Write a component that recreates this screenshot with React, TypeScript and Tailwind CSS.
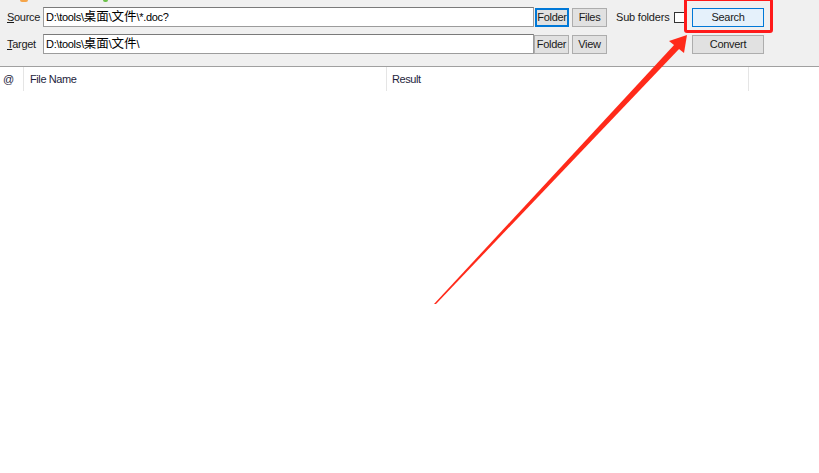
import React from 'react';

const font = { fontFamily: '"Liberation Sans", "Noto Sans CJK SC", sans-serif' };

const Btn: React.FC<{ label: string; w: string; variant?: 'focus' | 'hover' }> = ({ label, w, variant }) => {
  const tone =
    variant === 'focus'
      ? 'bg-[#e1e1e1] border-[#0078d7] border-2'
      : variant === 'hover'
      ? 'bg-[#e5f1fb] border-[#0078d7] border'
      : 'bg-[#e1e1e1] border-[#adadad] border';
  return (
    <div className={`${w} h-[19px] ${tone} flex items-center justify-center text-[11px] text-[#1a1a1a] tracking-[-0.3px]`}>
      {label}
    </div>
  );
};

// Latin in 11px, the Chinese folder names a little bigger like the original
const PathInput: React.FC<{ parts: string[] }> = ({ parts }) => (
  <div className="w-[491px] h-[20px] bg-white border border-[#9c9c9c] border-t-[#7a7a7a] flex items-center pl-[2px] text-[11px] text-black tracking-[-0.3px] whitespace-nowrap">
    {parts.map((p, i) =>
      /[\u4e00-\u9fff]/.test(p) ? (
        <span key={i} className="text-[12.5px] tracking-[0px]">
          {p}
        </span>
      ) : (
        <span key={i}>{p}</span>
      )
    )}
  </div>
);

const App: React.FC = () => {
  return (
    <div className="relative w-[819px] h-[473px] bg-white overflow-hidden" style={font}>
      {/* toolbar */}
      <div className="bg-[#f0f0f0] h-[66px] flex flex-col">
        <div className="h-[7px] flex items-start">
          <div className="ml-[20px] w-[8px] h-[2px] rounded-b bg-[#f5a54a]" />
          <div className="ml-[75px] w-[5px] h-[2px] rounded-b bg-[#6cc04a]" />
        </div>
        <div className="flex items-center h-[20px]">
          <div className="w-[43px] pl-[7px] text-[11px] text-[#1a1a1a] tracking-[-0.3px]">
            <span className="underline">S</span>ource
          </div>
          <PathInput parts={['D:\\tools\\', '桌面', '\\', '文件', '\\*.doc?']} />
          <div className="ml-[1px]">
            <Btn label="Folder" w="w-[34px]" variant="focus" />
          </div>
          <div className="ml-[3px]">
            <Btn label="Files" w="w-[35px]" />
          </div>
          <div className="ml-[9px] text-[11px] text-[#1a1a1a] tracking-[-0.2px] w-[58px]">Sub folders</div>
          <div className="w-[11px] h-[11px] bg-white border border-[#333333]" />
          <div className="ml-[7px]">
            <Btn label="Search" w="w-[72px]" variant="hover" />
          </div>
        </div>
        <div className="flex items-center h-[20px] mt-[7px]">
          <div className="w-[43px] pl-[7px] text-[11px] text-[#1a1a1a] tracking-[-0.3px]">
            <span className="underline">T</span>arget
          </div>
          <PathInput parts={['D:\\tools\\', '桌面', '\\', '文件', '\\']} />
          <div className="ml-[0px]">
            <Btn label="Folder" w="w-[35px]" />
          </div>
          <div className="ml-[3px]">
            <Btn label="View" w="w-[35px]" />
          </div>
          <div className="ml-[85px]">
            <Btn label="Convert" w="w-[72px]" />
          </div>
        </div>
      </div>
      <div className="h-[1px] bg-[#a0a0a0]" />

      {/* list header */}
      <div className="flex h-[24px] text-[11px] text-[#1e1e3c] tracking-[-0.4px]">
        <div className="w-[24px] pl-[3px] flex items-center border-r border-[#e5e5e5]">@</div>
        <div className="w-[363px] pl-[6px] flex items-center border-r border-[#e5e5e5]">File Name</div>
        <div className="w-[362px] pl-[5px] flex items-center border-r border-[#e5e5e5]">Result</div>
        <div className="flex-1" />
      </div>

      {/* annotation: red highlight box */}
      <div className="absolute left-[684px] top-[-2px] w-[89px] h-[35px] border-[3px] border-[#ff1a1a] rounded-[3px]" />

      {/* annotation: red arrow */}
      <svg className="absolute left-0 top-0" width="819" height="473" viewBox="0 0 819 473">
        <polygon points="434,304 436,304 680,48 675,44" fill="#ff2a1a" />
        <polygon points="687,35 669,41 684,53" fill="#ff2a1a" />
      </svg>
    </div>
  );
};

export default App;
